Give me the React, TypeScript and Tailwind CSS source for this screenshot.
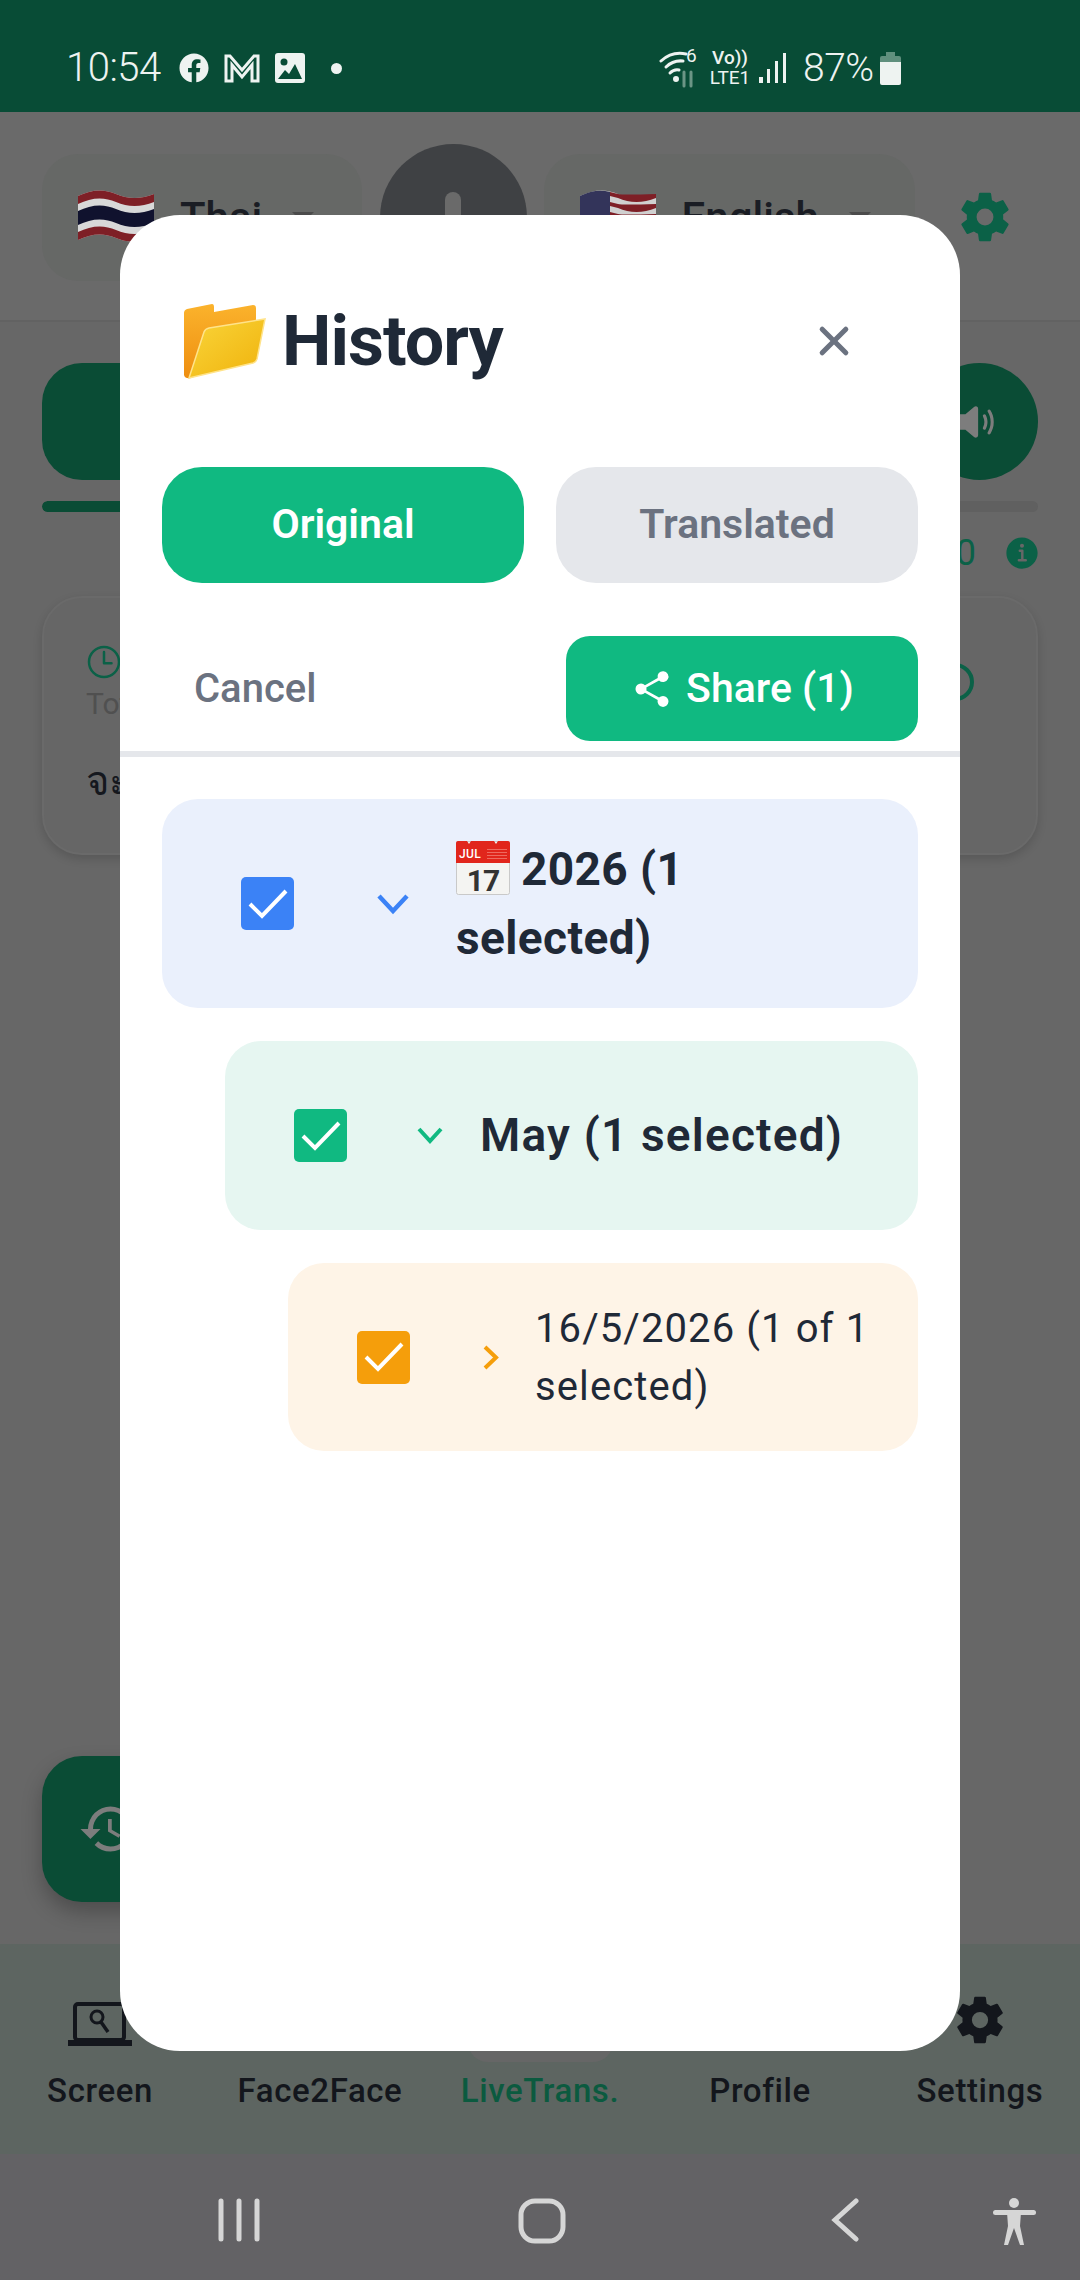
import React from "react";
import { IoSettingsSharp, IoClose, IoShareSocial, IoVolumeMedium, IoInformationCircle, IoTimeOutline } from "react-icons/io5";
import { FaFacebook } from "react-icons/fa";
import { MdHistory } from "react-icons/md";

function Folder() {
  return (
    <svg width="84" height="76" viewBox="0 0 84 76" className="shrink-0">
      <defs>
        <linearGradient id="fa" x1="0" y1="0" x2="0" y2="1"><stop offset="0" stopColor="#fbb32c" /><stop offset="1" stopColor="#ee8e10" /></linearGradient>
        <linearGradient id="fb" x1="0" y1="0" x2="1" y2="1"><stop offset="0" stopColor="#f9d53a" /><stop offset="1" stopColor="#f0b20c" /></linearGradient>
      </defs>
      <path d="M1 10 Q1 7 4 6 L29 1 Q31 1 31 4 V9 L70 2 Q73 2 73 5 V52 L8 75 Q2 76 1 72 Z" fill="url(#fa)" />
      <path d="M21 29 Q22 26 26 25 L82 16 L74 56 Q73 59 70 60 L6 75 Z" fill="url(#fb)" stroke="#ffe38a" strokeWidth="1.5" />
    </svg>
  );
}

function Calendar() {
  return (
    <svg width="54" height="54" viewBox="0 0 54 54" className="shrink-0 inline-block align-[-10px] mr-[11px]">
      <rect x="0.5" y="0.5" width="53" height="53" rx="2" fill="#f4f4f2" stroke="#c9c9c9" />
      <path d="M0 2 Q0 0 2 0 H11 L13 3 L15 0 H38 L40 3 L42 0 H52 Q54 0 54 2 V22 H0 Z" fill="#e1261c" />
      <text x="3" y="17" fontSize="12" fontWeight="500" fill="#fff" fontFamily="Roboto, sans-serif">JUL</text>
      <g fill="#ee6a60">
        <rect x="31" y="8" width="20" height="1" /><rect x="31" y="11" width="20" height="1" /><rect x="31" y="14" width="20" height="1" /><rect x="31" y="17" width="20" height="1" />
      </g>
      <text x="27" y="50" fontSize="30" fontWeight="700" fill="#333" textAnchor="middle" fontFamily="Roboto, sans-serif" letterSpacing="-1">17</text>
    </svg>
  );
}

function ThaiFlag() {
  return (
    <svg width="76" height="54" viewBox="0 0 76 54" className="shrink-0">
      <path d="M0 6 Q20 -4 38 4 T76 4 V46 Q56 56 38 48 T0 50 Z" fill="#d8d8d8" />
      <path d="M0 6 Q20 -4 38 4 T76 4 V12 Q56 20 38 12 T0 14 Z" fill="#7e1f26" />
      <path d="M0 21 Q20 11 38 19 T76 19 V33 Q56 41 38 33 T0 35 Z" fill="#10122e" />
      <path d="M0 42 Q20 32 38 40 T76 40 V46 Q56 56 38 48 T0 50 Z" fill="#7e1f26" />
    </svg>
  );
}

function UsFlag() {
  return (
    <svg width="76" height="54" viewBox="0 0 76 54" className="shrink-0">
      <path d="M0 6 Q20 -4 38 4 T76 4 V46 Q56 56 38 48 T0 50 Z" fill="#d0d0d0" />
      <path d="M30 2 Q34 3 38 4 T76 4 V8 Q56 16 38 8 L30 6 Z" fill="#7e1f26" />
      <path d="M30 12 Q34 13 38 14 T76 14 V18 Q56 26 38 18 L30 16 Z" fill="#7e1f26" />
      <path d="M30 22 Q34 23 38 24 T76 24 V28 Q56 36 38 28 L30 26 Z" fill="#7e1f26" />
      <path d="M0 6 Q16 -2 30 2 V30 Q14 26 0 32 Z" fill="#33345a" />
    </svg>
  );
}

function Check({ className }: { className: string }) {
  return (
    <div className={`w-[53px] h-[53px] rounded-[5px] flex items-center justify-center shrink-0 ${className}`}>
      <svg width="40" height="30" viewBox="0 0 40 30" fill="none" stroke="#fff" strokeWidth="4"><path d="M2 15 L14 27 L38 2" /></svg>
    </div>
  );
}

function Laptop() {
  return (
    <svg width="64" height="44" viewBox="0 0 64 44" fill="none" stroke="#13161c">
      <rect x="7" y="2" width="49" height="36" rx="3" strokeWidth="4" />
      <circle cx="29" cy="15" r="6" strokeWidth="3" />
      <path d="M33 20 L40 30" strokeWidth="3.5" />
      <rect x="0" y="38" width="64" height="6" fill="#13161c" stroke="none" />
    </svg>
  );
}

function TabLabel({ label, active }: { label: string; active?: boolean }) {
  return <span className={`text-[33px] leading-[40px] tracking-[0.6px] font-medium ${active ? "text-[#0b5a3f]" : "text-[#13161c]"}`}>{label}</span>;
}

function TabItem({ label, active, children }: { label: string; active?: boolean; children?: React.ReactNode }) {
  return (
    <div className="flex flex-col items-center">
      <div className="h-[51px] mb-[25px] flex items-end">{children}</div>
      <TabLabel label={label} active={active} />
    </div>
  );
}

export default function App() {
  return (
    <div className="relative w-[1080px] h-[2280px] overflow-hidden bg-[#676767] font-[Roboto,sans-serif] flex flex-col">
      {/* status bar */}
      <div className="h-[112px] bg-[#084c36] flex items-center justify-between pl-[66px] pr-[179px] pt-[24px] text-[#eef3f1] shrink-0">
        <div className="flex items-center">
          <span className="text-[40px] font-light leading-none w-[113px] tracking-[-0.5px]">10:54</span>
          <FaFacebook className="w-[30px] h-[30px]" />
          <svg width="36" height="30" viewBox="0 0 36 30" fill="none" stroke="#eef3f1" strokeWidth="3" className="ml-[15px]">
            <path d="M2 28 V3 H6 L18 17 L30 3 H34 V28 H28 V12 L18 24 L8 12 V28 Z" />
          </svg>
          <svg width="30" height="30" viewBox="0 0 30 30" className="ml-[15px]">
            <rect width="30" height="30" rx="3" fill="#eef3f1" />
            <circle cx="9" cy="9" r="3.5" fill="#084c36" />
            <path d="M3 26 L10 17 L14 21 L20 11 L27 26 Z" fill="#084c36" />
          </svg>
          <div className="w-[11px] h-[11px] rounded-full bg-[#eef3f1] ml-[26px]" />
        </div>
        <div className="flex items-center">
          <svg width="38" height="40" viewBox="0 0 38 40" fill="none" stroke="#eef3f1" strokeWidth="3" strokeLinecap="round">
            <path d="M2 13 Q13 3 27 6" /><path d="M7 19 Q14 12 24 13" /><path d="M11 25 Q15 21 20 22" />
            <circle cx="17" cy="31" r="1.5" fill="#eef3f1" />
            <path d="M25 24 V38 M32 38 V24" stroke="#6b9585" />
            <text x="27" y="14" fontSize="19" fill="#eef3f1" stroke="none" fontFamily="Roboto, sans-serif">6</text>
          </svg>
          <div className="flex flex-col ml-[13px] w-[40px] text-[19px] leading-[20px] items-center">
            <span className="font-medium">Vo))</span>
            <span>LTE1</span>
          </div>
          <svg width="30" height="32" viewBox="0 0 30 32" fill="#eef3f1" className="ml-[8px]">
            <rect x="1" y="25" width="4" height="6" /><rect x="9" y="17" width="3" height="14" /><rect x="17" y="9" width="3" height="22" /><rect x="25" y="1" width="3" height="30" />
          </svg>
          <span className="text-[39px] font-light leading-none ml-[15px] w-[77px] tracking-[-0.5px]">87%</span>
          <svg width="21" height="33" viewBox="0 0 21 33">
            <path d="M6 0 H15 V4 H19 Q21 4 21 6 V12 H0 V6 Q0 4 2 4 H6 Z" fill="#5f8f7d" />
            <path d="M0 10 H21 V31 Q21 33 19 33 H2 Q0 33 0 31 Z" fill="#eef3f1" />
          </svg>
        </div>
      </div>

      {/* app header */}
      <div className="h-[210px] shrink-0 bg-[#6a6a6a] border-b-2 border-[#626262] flex items-center pl-[42px] pr-[68px] pt-[2px]">
        <div className="w-[320px] h-[127px] rounded-[36px] bg-[#666866] flex items-center pl-[36px]">
          <ThaiFlag />
          <span className="ml-[26px] text-[42px] font-medium text-[#1a1d24]">Thai</span>
          <div className="ml-[30px] w-0 h-0 border-x-[11px] border-x-transparent border-t-[11px] border-t-[#4b4b4b]" />
        </div>
        <div className="w-[147px] h-[147px] rounded-full bg-[#3f4144] ml-[18px] shrink-0 flex justify-center pt-[48px]">
          <div className="w-[16px] h-[60px] rounded-full bg-[#6a6a6a]" />
        </div>
        <div className="w-[372px] h-[127px] rounded-[36px] bg-[#666866] flex items-center pl-[36px] ml-[17px]">
          <UsFlag />
          <span className="ml-[26px] text-[42px] font-medium text-[#1a1d24]">English</span>
          <div className="ml-[30px] w-0 h-0 border-x-[11px] border-x-transparent border-t-[11px] border-t-[#4b4b4b]" />
        </div>
        <IoSettingsSharp className="w-[54px] h-[54px] text-[#0b6147] ml-[43px] shrink-0" />
      </div>

      {/* body */}
      <div className="flex-1 flex flex-col px-[42px] pt-[41px]">
        <div className="flex justify-between h-[117px] shrink-0">
          <div className="w-[300px] rounded-[40px] bg-[#0a4c35]" />
          <div className="w-[117px] rounded-full bg-[#0a4c35] flex items-center justify-center">
            <IoVolumeMedium className="w-[50px] h-[50px] text-[#7d7d7d] ml-[-10px]" />
          </div>
        </div>
        <div className="h-[11px] mt-[21px] rounded-full bg-[#606060] shrink-0 overflow-hidden">
          <div className="h-full w-[200px] bg-[#0a4c35] rounded-full" />
        </div>
        <div className="flex justify-end items-center h-[36px] mt-[23px] shrink-0">
          <span className="text-[36px] text-[#0b6147] leading-none">0</span>
          <IoInformationCircle className="w-[40px] h-[40px] text-[#0b6147] ml-[26px] mr-[-4px]" />
        </div>
        <div className="h-[259px] mt-[25px] rounded-[40px] bg-[#666666] border-2 border-[#6a6a6a] shadow-[0_4px_10px_rgba(0,0,0,0.15)] shrink-0 pl-[42px] pt-[44px] flex flex-col">
          <div className="flex justify-between pr-[62px] h-[40px]">
            <IoTimeOutline className="w-[40px] h-[40px] text-[#0b6147] ml-[-2px]" />
            <div className="w-[38px] h-[38px] rounded-full border-[4px] border-[#0b6147] mt-[21px]" />
          </div>
          <span className="text-[30px] leading-[36px] text-[#505050] mt-[4px]">Total</span>
          <span className="text-[40px] mt-[36px] leading-[44px] text-[#15181e] font-['Noto_Sans','DejaVu_Sans',sans-serif]">จะ</span>
        </div>
        <div className="flex-1" />
        <div className="w-[300px] h-[146px] rounded-[40px] bg-[#0a4c35] shadow-[0_10px_20px_rgba(0,0,0,0.25)] mb-[42px] flex items-center pl-[36px] shrink-0">
          <MdHistory className="w-[60px] h-[60px] text-[#7d7d7d]" />
        </div>
      </div>

      {/* tab bar */}
      <div className="h-[210px] shrink-0 bg-[#5d6561] pt-[51px]">
        <div className="w-[1100px] ml-[-10px] grid grid-cols-5">
          <TabItem label="Screen"><Laptop /></TabItem>
          <TabItem label="Face2Face" />
          <TabItem label="LiveTrans." active />
          <TabItem label="Profile" />
          <TabItem label="Settings"><IoSettingsSharp className="w-[52px] h-[52px] text-[#13161c]" /></TabItem>
        </div>
      </div>

      {/* nav bar */}
      <div className="h-[126px] shrink-0 bg-[#636265] flex items-start pt-[44px] pl-[218px]">
        <svg width="42" height="44" viewBox="0 0 42 44" fill="none" stroke="#d6d6d6" strokeWidth="5" strokeLinecap="round"><path d="M3 3 V41 M21 3 V41 M39 3 V41" /></svg>
        <svg width="48" height="46" viewBox="0 0 48 46" fill="none" stroke="#d6d6d6" strokeWidth="5" className="ml-[258px]"><rect x="3" y="3" width="42" height="40" rx="14" /></svg>
        <svg width="30" height="44" viewBox="0 0 30 44" fill="none" stroke="#d6d6d6" strokeWidth="5" strokeLinecap="round" className="ml-[264px]"><path d="M26 3 L5 22 L26 41" /></svg>
        <svg width="44" height="48" viewBox="0 0 44 48" fill="#d6d6d6" className="ml-[133px]">
          <circle cx="21" cy="5" r="5" /><rect x="0" y="12" width="43" height="5" rx="2.5" />
          <path d="M14 14 H28 L27 28 L31 47 H27 L21 30 L15 47 H11 L15 28 Z" />
        </svg>
      </div>

      {/* tab indicator peeking from under the modal */}
      <div className="absolute left-[468px] top-[2040px] w-[145px] h-[22px] rounded-b-[20px] bg-[#666666]" />

      {/* modal */}
      <div className="absolute left-[120px] top-[215px] w-[840px] h-[1836px] rounded-[60px] bg-white flex flex-col">
        <div className="flex items-center h-[176px] pt-[75px] pl-[63px] pr-[99px] shrink-0">
          <Folder />
          <span className="ml-[15px] text-[70px] leading-none font-bold text-[#1f2937] flex-1 tracking-[-1px]">History</span>
          <IoClose className="w-[54px] h-[54px] text-[#6b7280]" />
        </div>
        <div className="flex gap-[32px] px-[42px] mt-[76px] shrink-0">
          <div className="w-[362px] h-[116px] rounded-[40px] bg-[#10b981] flex items-center justify-center text-[41px] font-semibold text-white">Original</div>
          <div className="w-[362px] h-[116px] rounded-[40px] bg-[#e5e7eb] flex items-center justify-center text-[41px] font-semibold text-[#6b7280]">Translated</div>
        </div>
        <div className="flex justify-between items-center pl-[74px] pr-[42px] mt-[53px] shrink-0">
          <span className="text-[40px] font-medium text-[#6b7280]">Cancel</span>
          <div className="w-[352px] h-[105px] rounded-[24px] bg-[#10b981] flex items-center justify-center text-[41px] font-medium text-white">
            <IoShareSocial className="w-[44px] h-[44px] mr-[12px]" />
            <span>Share (1)</span>
          </div>
        </div>
        <div className="h-[6px] bg-[#e5e7eb] mt-[10px] shrink-0" />
        <div className="flex flex-col gap-[33px] px-[42px] pt-[42px]">
          <div className="h-[209px] rounded-[36px] bg-[#eaf0fc] flex items-center pl-[79px]">
            <Check className="bg-[#3b82f6]" />
            <svg width="32" height="22" viewBox="0 0 32 22" fill="none" stroke="#3b82f6" strokeWidth="4.5" className="ml-[83px] shrink-0"><path d="M2 3 L16 18 L30 3" /></svg>
            <div className="ml-[47px] w-[360px] text-[46px] leading-[69px] font-bold text-[#1f2937] tracking-[0.4px]"><Calendar />2026 (1 selected)</div>
          </div>
          <div className="h-[189px] rounded-[36px] bg-[#e6f6f1] ml-[63px] flex items-center pl-[69px]">
            <Check className="bg-[#10b981]" />
            <svg width="26" height="19" viewBox="0 0 26 19" fill="none" stroke="#10b981" strokeWidth="4" className="ml-[70px] shrink-0"><path d="M2 3 L13 15 L24 3" /></svg>
            <span className="ml-[37px] text-[46px] font-semibold text-[#1f2937] tracking-[1.2px]">May (1 selected)</span>
          </div>
          <div className="h-[188px] rounded-[36px] bg-[#fef4e7] ml-[126px] flex items-center pl-[69px]">
            <Check className="bg-[#f59e0b]" />
            <svg width="17" height="25" viewBox="0 0 17 25" fill="none" stroke="#f59e0b" strokeWidth="4" className="ml-[72px] shrink-0"><path d="M3 2 L14 12.5 L3 23" /></svg>
            <div className="ml-[36px] w-[350px] pt-[2px] text-[40px] leading-[58px] font-normal text-[#1f2937] tracking-[1.1px]">16/5/2026 (1 of 1 selected)</div>
          </div>
        </div>
      </div>
    </div>
  );
}
